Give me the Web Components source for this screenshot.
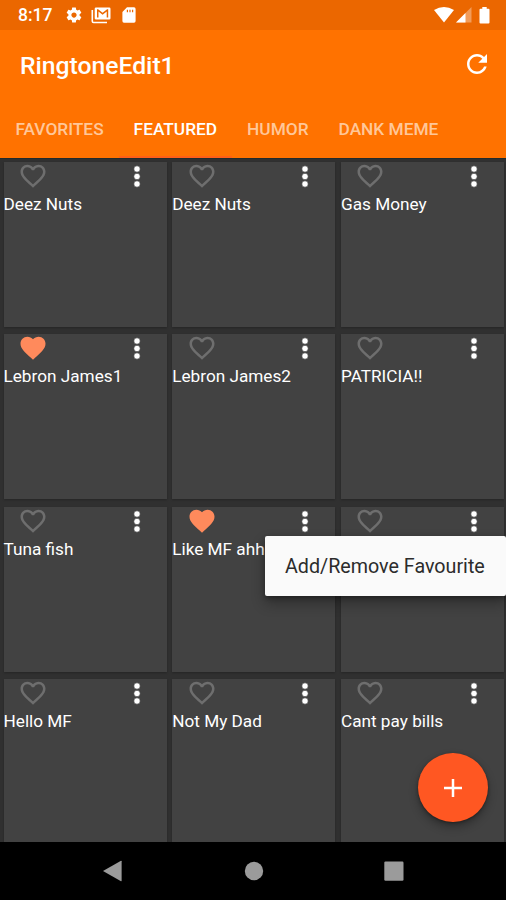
<!DOCTYPE html>
<html lang="en">
<head>
<meta charset="utf-8">
<title>RingtoneEdit1</title>
<style>
html, body { margin: 0; height: 100%; overflow: hidden; background: #303030; }
body { font-family: Roboto, "Noto Sans", sans-serif; }
</style>
</head>
<body>
<ringtone-app></ringtone-app>
<script>
const define = (name, html, setup) => customElements.define(name, class extends HTMLElement {
  connectedCallback() {
    if (this.shadowRoot) return;
    const t = document.createElement('template');
    t.innerHTML = html;
    this.attachShadow({ mode: 'open' }).append(t.content.cloneNode(true));
    if (setup) setup(this, this.shadowRoot);
  }
});

define('status-bar', `
<style>
:host { display: flex; align-items: center; height: 30px; box-sizing: border-box; background: #eb6700; color: #fff; padding: 0 16px 0 18px; font-size: 17.5px; font-weight: 500; }
.time { width: 47px; line-height: 31px; height: 30px; }
svg { display: block; fill: #fff; }
.gap { flex: 1; }
</style>
<span class="time">8:17</span>
<svg width="18" height="18" viewBox="0 0 24 24"><path d="M19.43 12.98c.04-.32.07-.64.07-.98s-.03-.66-.07-.98l2.11-1.65c.19-.15.24-.42.12-.64l-2-3.46c-.12-.22-.39-.3-.61-.22l-2.49 1c-.52-.4-1.08-.73-1.69-.98l-.38-2.65C14.46 2.18 14.25 2 14 2h-4c-.25 0-.46.18-.49.42l-.38 2.65c-.61.25-1.17.59-1.69.98l-2.49-1c-.23-.09-.49 0-.61.22l-2 3.46c-.13.22-.07.49.12.64l2.11 1.65c-.04.32-.07.65-.07.98s.03.66.07.98l-2.11 1.65c-.19.15-.24.42-.12.64l2 3.46c.12.22.39.3.61.22l2.49-1c.52.4 1.08.73 1.69.98l.38 2.65c.03.24.24.42.49.42h4c.25 0 .46-.18.49-.42l.38-2.65c.61-.25 1.17-.59 1.69-.98l2.49 1c.23.09.49 0 .61-.22l2-3.46c.12-.22.07-.49-.12-.64l-2.11-1.65zM12 15.5c-1.93 0-3.5-1.57-3.5-3.5s1.570-3.500 3.500-3.500 3.500 1.570 3.500 3.500-1.570 3.500-3.500 3.500z"/></svg>
<svg width="20" height="17" viewBox="0 0 20 17" style="margin-left:8px"><path d="M1.3 3v11.3q0 1.200 1.200 1.200H16" fill="none" stroke="#fff" stroke-width="1.600"/><path fill-rule="evenodd" d="M5 0.500h13.200q1.300 0 1.300 1.300v9.500q0 1.300-1.300 1.300H5q-1.300 0-1.300-1.300V1.800Q3.700.5 5 .5zM6 2.300v8.300h1.500V4.500l4.100 3.200 4.100-3.200v6.100h1.500V2.300h-1.100l-4.500 3.500-4.500-3.500z"/></svg>
<svg width="14" height="16" viewBox="0 0 14 16" style="margin-left:11px"><path fill-rule="evenodd" d="M5 .3h7q1.600 0 1.600 1.600v12.200q0 1.600-1.600 1.600H2q-1.600 0-1.600-1.600V5zM4.800 2.800v2.400H6V2.800zm2.600 0v2.400h1.200V2.800zm2.600 0v2.400h1.200V2.800z"/></svg>
<span class="gap"></span>
<svg width="20" height="16" viewBox="0 0 20 16"><path d="M0 3Q10-3 20 3L10 15.500z"/></svg>
<svg width="16" height="16" viewBox="0 0 16 16" style="margin-left:2px"><path d="M15.500 0v15.500H0z" opacity=".35"/><path d="M9.500 6v9.500H0z"/></svg>
<svg width="11" height="17" viewBox="0 0 11 17" style="margin-left:7px"><path d="M3.300 0h4.400v1.800H9.500q1 0 1 1V15.500q0 1-1 1H1.500q-1 0-1-1V2.800q0-1 1-1h1.800z"/></svg>`);

define('tool-bar', `
<style>
:host { display: flex; align-items: center; justify-content: space-between; height: 69px; padding: 1px 14px 0 20px; color: #fff; font-size: 24.700px; font-weight: 500; line-height: 30px; box-sizing: border-box; }
span { padding-top: 2px; }
svg { display: block; margin-top: -2px; }
</style>
<span><slot></slot></span>
<svg width="30" height="30" viewBox="0 0 24 24" fill="#fff"><path d="M17.650 6.350C16.200 4.900 14.210 4 12 4c-4.420 0-7.990 3.580-7.990 8s3.570 8 7.990 8c3.730 0 6.840-2.550 7.730-6h-2.080c-.82 2.330-3.040 4-5.650 4-3.310 0-6-2.690-6-6s2.690-6 6-6c1.660 0 3.140.69 4.220 1.780L13 11h7V4l-2.350 2.350z"/></svg>`);

define('tab-item', `
<style>
:host { display: block; padding: 0 15px; height: 59px; box-sizing: border-box; line-height: 60px; font-size: 17.300px; font-weight: 500; color: #ffc799; white-space: nowrap; }
:host([active]) { color: #fff; border-bottom: 2px solid #ff5f17; }
</style><slot></slot>`);

define('tab-strip', `<style>:host { display: flex; height: 59px; padding-left: .6px; }</style><slot></slot>`);

define('ringtone-card', `
<style>
:host { display: block; background: #424242; color: #fff; font-size: 17.2px; box-shadow: 0 1px 2px rgba(0,0,0,.22); min-width: 0; }
.actions { display: flex; justify-content: space-between; height: 29px; padding: 0 22px 0 14.500px; }
svg { display: block; }
.heart { fill: #6e6e6e; margin-top: -1px; }
.fill { display: none; }
:host([favorite]) .heart { fill: #ff8a5c; }
:host([favorite]) .fill { display: block; }
:host([favorite]) .line { display: none; }
.name { line-height: 26px; white-space: nowrap; }
</style>
<div class="actions">
<svg class="heart" width="30" height="30" viewBox="0 0 24 24">
<path class="fill" d="M12 21.350l-1.450-1.320C5.400 15.360 2 12.280 2 8.500 2 5.420 4.420 3 7.500 3c1.740 0 3.410.81 4.500 2.090C13.090 3.810 14.760 3 16.500 3 19.580 3 22 5.420 22 8.500c0 3.780-3.400 6.860-8.550 11.540L12 21.350z"/>
<path class="line" d="M16.500 3c-1.740 0-3.410.81-4.500 2.090C10.910 3.810 9.240 3 7.500 3 4.420 3 2 5.420 2 8.500c0 3.780 3.400 6.860 8.550 11.540L12 21.350l1.450-1.320C18.600 15.360 22 12.280 22 8.500 22 5.420 19.580 3 16.500 3zm-4.400 15.550l-.1.100-.1-.1C7.140 14.240 4 11.390 4 8.500 4 6.500 5.500 5 7.500 5c1.540 0 3.040.99 3.570 2.360h1.870C13.460 5.990 14.960 5 16.500 5c2 0 3.500 1.500 3.500 3.500 0 2.890-3.140 5.740-7.900 10.050z"/></svg>
<svg width="16" height="29" viewBox="0 0 16 29" fill="#fff"><g stroke="#303030" stroke-width=".6"><circle cx="8" cy="7" r="3.200"/><circle cx="8" cy="14.500" r="3.200"/><circle cx="8" cy="22" r="3.200"/></g></svg>
</div>
<div class="name"><slot></slot></div>`);

define('ringtone-grid', `
<style>:host { display: grid; grid-template-columns: repeat(3, 1fr); grid-auto-rows: 164.700px; column-gap: 5.700px; row-gap: 7.800px; padding: 3px 2px 0 3.500px; height: 684px; box-sizing: border-box; overflow: hidden; background: #303030; border-top: 1px solid #222b2c; }</style><slot></slot>`);

define('popup-menu', `
<style>:host { display: block; position: absolute; left: 265px; top: 536px; width: 241px; height: 60px; box-sizing: border-box; padding-left: 20px; background: #fafafa; border-radius: 2px; color: #2c2c2c; font-size: 19.700px; line-height: 61px; white-space: nowrap; box-shadow: 0 7px 14px rgba(0,0,0,.32), 0 2px 4px rgba(0,0,0,.3); }</style><slot></slot>`);

define('add-button', `
<style>:host { display: grid; place-items: center; position: absolute; left: 418px; top: 753px; width: 69.500px; height: 69px; border-radius: 50%; background: #ff5722; box-shadow: 0 5px 10px rgba(0,0,0,.3), 0 1px 3px rgba(0,0,0,.35); } svg { display: block; }</style>
<svg width="18" height="18" viewBox="0 0 18 18"><path d="M9 0v18M0 9h18" stroke="#fff" stroke-width="2.500"/></svg>`);

define('nav-bar', `
<style>:host { display: flex; align-items: center; justify-content: space-between; height: 58px; background: #000; padding: 0 103px; box-sizing: border-box; } svg { display: block; fill: #9b9b9b; }</style>
<svg width="19" height="22" viewBox="0 0 19 22"><path d="M0 11L18 .8q.6-.2.600.400v19.600q0 .6-.600.400z"/></svg>
<svg width="20" height="20" viewBox="0 0 20 20" style="margin-left:2px"><circle cx="10" cy="10" r="9.200"/></svg>
<svg width="20" height="20" viewBox="0 0 20 20" style="margin-right:-.5px"><rect x=".3" y=".5" width="19.200" height="19.200" rx="1.200"/></svg>`);

define('ringtone-app', `
<style>:host { display: block; position: relative; width: 506px; height: 900px; overflow: hidden; } header { background: #ff7200; }</style>
<header><status-bar></status-bar><tool-bar>RingtoneEdit1</tool-bar>
<tab-strip><tab-item>FAVORITES</tab-item><tab-item active>FEATURED</tab-item><tab-item>HUMOR</tab-item><tab-item>DANK MEME</tab-item></tab-strip></header>
<ringtone-grid></ringtone-grid><nav-bar></nav-bar>
<popup-menu>Add/Remove Favourite</popup-menu><add-button></add-button>`, (host, root) => {
  const liked = ['Lebron James1', 'Like MF ahh'];
  ['Deez Nuts', 'Deez Nuts', 'Gas Money', 'Lebron James1', 'Lebron James2', 'PATRICIA!!', 'Tuna fish', 'Like MF ahh', '', 'Hello MF', 'Not My Dad', 'Cant pay bills'].forEach(name => {
    const card = document.createElement('ringtone-card');
    card.textContent = name;
    card.toggleAttribute('favorite', liked.includes(name));
    root.querySelector('ringtone-grid').append(card);
  });
});
</script>
</body>
</html>
